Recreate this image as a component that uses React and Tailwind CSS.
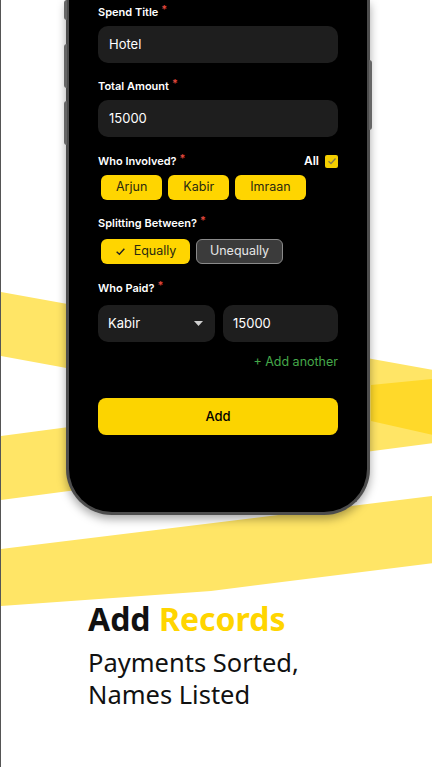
import React from 'react';

function Label({ children, className = '' }) {
  return (
    <div className={`flex items-start h-[14px] text-[11px] leading-[14px] font-semibold text-white ${className}`}>
      {children}
      <span className="ml-[3px] -mt-[3px] text-[11px] text-[#e0473c]">*</span>
    </div>
  );
}

function Stripes() {
  return (
    <svg className="absolute inset-0" width="432" height="767" viewBox="0 0 432 767">
      <polygon points="0,292 432,370 432,435 0,356" fill="#ffe566" />
      <polygon points="0,436 432,379 432,443 0,500" fill="#ffe566" />
      <polygon points="0,549 432,496 432,563 210,591 0,606" fill="#ffe566" />
      <polygon points="370,385 432,379 432,435 370,421" fill="#ffd92a" />
    </svg>
  );
}

export default function App() {
  const people = ['Arjun', 'Kabir', 'Imraan'];
  return (
    <div className="relative w-[432px] h-[767px] overflow-hidden bg-white border-l border-[#555]" style={{ fontFamily: 'Inter, "Noto Sans", sans-serif' }}>
      <Stripes />

      {/* phone */}
      <div className="relative ml-[65px] w-[304px]">
        <div className="absolute -left-[2px] top-0 w-[3px] h-[20px] bg-[#666] rounded-l" />
        <div className="absolute -left-[2px] top-[44px] w-[3px] h-[44px] bg-[#666] rounded-l" />
        <div className="absolute -left-[2px] top-[101px] w-[3px] h-[44px] bg-[#666] rounded-l" />
        <div className="absolute -right-[2px] top-[60px] w-[3px] h-[70px] bg-[#666] rounded-r" />
        <div className="h-[515px] bg-black border-x-[3px] border-b-[3px] border-[#4d4d4d] rounded-b-[46px] shadow-[0_4px_10px_rgba(0,0,0,0.35)] px-[29px] pt-[5px]">
          <Label>Spend Title</Label>
          <div className="mt-[7px] h-[37px] rounded-[10px] bg-[#1e1e1e] flex items-center px-[11px] text-[13px] text-white">Hotel</div>

          <Label className="mt-[16px]">Total Amount</Label>
          <div className="mt-[7px] h-[37px] rounded-[10px] bg-[#1e1e1e] flex items-center px-[11px] text-[13px] text-white">15000</div>

          <div className="mt-[15px] flex items-center justify-between">
            <Label>Who Involved?</Label>
            <div className="flex items-center gap-[6px] text-[12px] font-semibold text-white">
              All
              <span className="w-[13px] h-[13px] bg-[#f5cf00] rounded-[2px] flex items-center justify-center">
                <svg width="10" height="10" viewBox="0 0 10 10"><path d="M1.5 5.2 L4 7.5 L8.5 2.5" stroke="#8a7d4a" strokeWidth="1.3" fill="none" /></svg>
              </span>
            </div>
          </div>
          <div className="mt-[5px] flex gap-[6px] pl-[3px]">
            {people.map(p => (
              <div key={p} className="h-[25px] px-[15px] rounded-[6px] bg-[#ffd500] flex items-center text-[12.5px] text-[#2a2a10]">{p}</div>
            ))}
          </div>

          <Label className="mt-[16px]">Splitting Between?</Label>
          <div className="mt-[9px] flex gap-[6px] pl-[3px]">
            <div className="h-[25px] w-[89px] rounded-[6px] bg-[#ffd500] flex items-center justify-center gap-[8px] text-[12.5px] text-[#2a2a10]">
              <svg width="11" height="11" viewBox="0 0 10 10"><path d="M1.5 5.2 L4 7.5 L8.5 2.5" stroke="#222" strokeWidth="1.3" fill="none" /></svg>
              Equally
            </div>
            <div className="h-[25px] w-[87px] rounded-[6px] bg-[#3b3b3b] border border-[#8a8a8a] flex items-center justify-center text-[12.5px] text-[#e6e6e6]">Unequally</div>
          </div>

          <Label className="mt-[17px]">Who Paid?</Label>
          <div className="mt-[10px] flex gap-[8px]">
            <div className="flex-1 h-[37px] rounded-[10px] bg-[#1e1e1e] flex items-center justify-between px-[10px] pr-[12px] text-[13px] text-white">
              Kabir
              <svg width="9" height="5" viewBox="0 0 9 5"><path d="M0 0 L9 0 L4.5 5 Z" fill="#cfcfcf" /></svg>
            </div>
            <div className="flex-1 h-[37px] rounded-[10px] bg-[#1e1e1e] flex items-center px-[10px] text-[13px] text-white">15000</div>
          </div>
          <div className="mt-[12px] text-right text-[12.5px] leading-[16px] text-[#45a84a]">+ Add another</div>

          <div className="mt-[28px] h-[37px] rounded-[8px] bg-[#fcd400] flex items-center justify-center text-[13px] font-medium text-black">Add</div>
        </div>
      </div>

      {/* caption */}
      <div className="relative pl-[87px] mt-[86px]" style={{ fontFamily: '"Noto Sans", Inter, sans-serif' }}>
        <div className="text-[32px] leading-[36px] font-bold text-[#111]">
          Add <span className="text-[#ffd500]">Records</span>
        </div>
        <div className="mt-[9px] text-[25.5px] leading-[32px] text-[#111]">
          Payments Sorted,<br />Names Listed
        </div>
      </div>
    </div>
  );
}
